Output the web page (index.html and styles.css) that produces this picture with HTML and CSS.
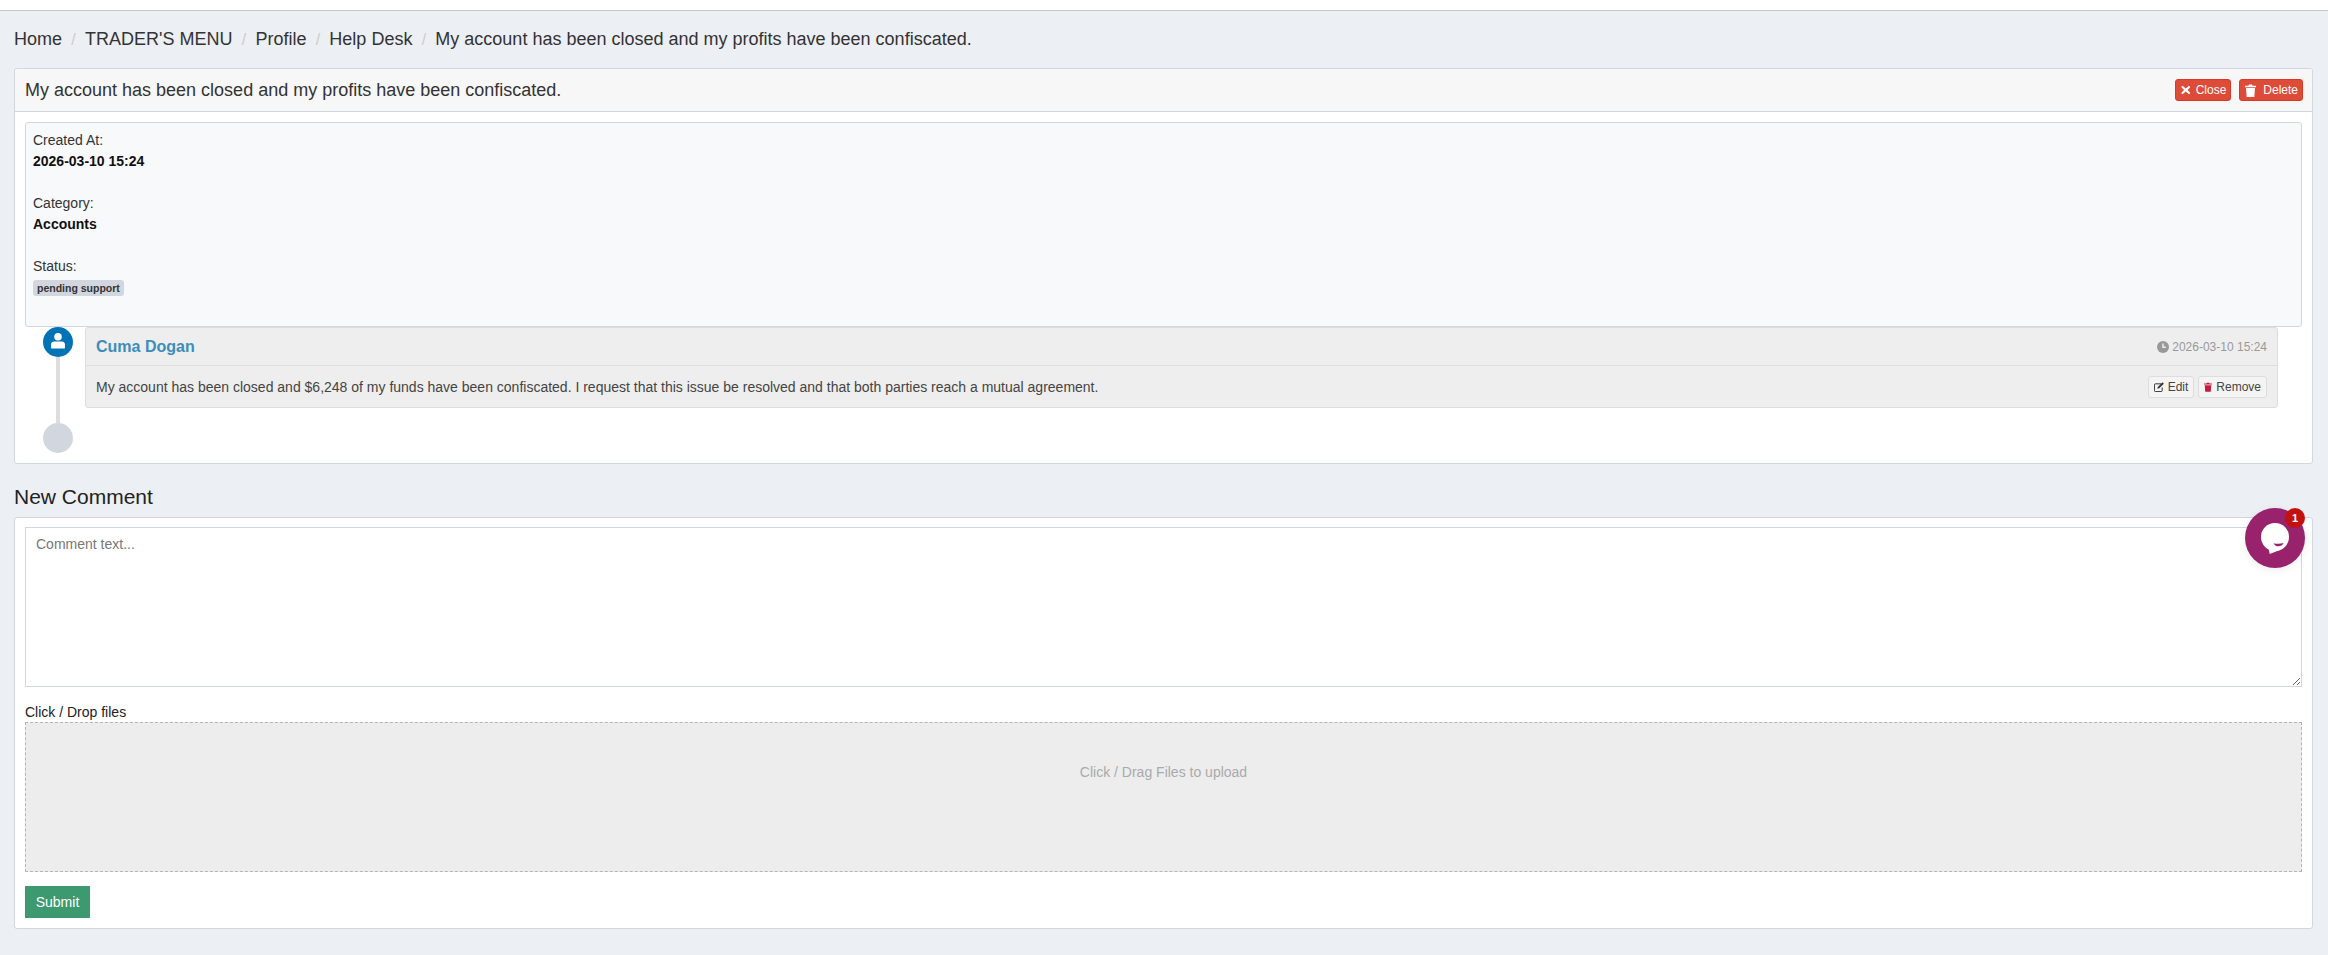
FILE: index.html
```html
<!DOCTYPE html>
<html lang="en">
<head>
<meta charset="utf-8">
<title>Help Desk</title>
<link rel="stylesheet" href="styles.css">
</head>
<body>
<div class="topbar"></div>
<main class="content">
  <nav class="crumbs">
    <a>Home</a><span class="sep">/</span><a>TRADER'S MENU</a><span class="sep">/</span><a>Profile</a><span class="sep">/</span><a>Help Desk</a><span class="sep">/</span><span>My account has been closed and my profits have been confiscated.</span>
  </nav>

  <section class="card">
    <header class="card-head">
      <h3>My account has been closed and my profits have been confiscated.</h3>
      <div class="head-actions">
        <button class="btn-red"><svg class="ico" viewBox="0 0 10 10"><path d="M1.6 0.4 5 3.4 8.4 0.4 9.8 1.9 6.8 5 9.8 8.1 8.4 9.6 5 6.6 1.6 9.6 0.2 8.1 3.2 5 0.2 1.9Z" fill="#fff"/></svg>Close</button>
        <button class="btn-red"><svg class="ico-trash" viewBox="0 0 11 13"><path d="M0 1.8H3.4L4 .6H7L7.6 1.8H11V3.2H0ZM1 4H10L9.3 13H1.7Z" fill="#fff"/></svg>Delete</button>
      </div>
    </header>
    <div class="card-body">
      <div class="info">
        <div class="info-label">Created At:</div>
        <div class="info-value">2026-03-10 15:24</div>
        <div class="info-label">Category:</div>
        <div class="info-value">Accounts</div>
        <div class="info-label">Status:</div>
        <span class="badge">pending support</span>
      </div>
      <div class="timeline">
        <div class="rail">
          <span class="dot dot-user"><svg viewBox="0 0 14 16" width="14" height="16"><circle cx="7" cy="3.800" r="3.800" fill="#fff"/><path d="M0 14.400V11.600C0 9.600 1.500 8.400 3.400 8.400H10.600C12.500 8.400 14 9.600 14 11.600V14.400A1.200 1.200 0 0 1 12.800 15.600H1.200A1.200 1.200 0 0 1 0 14.400Z" fill="#fff"/></svg></span>
          <span class="line"></span>
          <span class="dot dot-end"></span>
        </div>
        <article class="comment">
          <header class="comment-head">
            <a class="author">Cuma Dogan</a>
            <span class="time"><svg viewBox="0 0 12 12" width="12" height="12"><circle cx="6" cy="6" r="6" fill="#999"/><path d="M6 2.600V6.300H8.800" stroke="#eee" stroke-width="1.400" fill="none"/></svg>2026-03-10 15:24</span>
          </header>
          <div class="comment-body">
            <p>My account has been closed and $6,248 of my funds have been confiscated. I request that this issue be resolved and that both parties reach a mutual agreement.</p>
            <div class="comment-actions">
              <button class="btn-mini"><svg viewBox="0 0 12 12" width="10" height="10"><path d="M8.500 2.200H1.600A1.100 1.100 0 0 0 .5 3.300V10.400A1.100 1.100 0 0 0 1.600 11.500H8.700A1.100 1.100 0 0 0 9.800 10.400V6.600" stroke="#333" stroke-width="1.200" fill="none"/><path d="M10.200 .4 11.800 2 6.200 7.600 4 8.200 4.600 6Z" fill="#333"/></svg>Edit</button>
              <button class="btn-mini"><svg viewBox="0 0 11 13" width="8" height="10"><path d="M0 1.800H3.400L4 .6H7L7.600 1.800H11V3.200H0ZM1 4H10L9.300 13H1.700Z" fill="#c7193f"/></svg>Remove</button>
            </div>
          </div>
        </article>
      </div>
    </div>
  </section>

  <h2 class="section-title">New Comment</h2>

  <section class="card">
    <form class="card-body form">
      <textarea class="field" placeholder="Comment text..."></textarea>
      <label class="drop-label">Click / Drop files</label>
      <div class="dropzone">Click / Drag Files to upload</div>
      <button type="button" class="btn-submit">Submit</button>
    </form>
  </section>
</main>

<div class="chat">
  <svg viewBox="0 0 28 31" width="28" height="31"><circle cx="14" cy="14" r="14" fill="#fff"/><path d="M7.500 25 8.700 31 19 27Z" fill="#fff"/><path d="M12.500 20.200Q17.500 21.400 22.600 20Q21 23.300 17.200 23.300Q14 23.300 12.500 20.200Z" fill="#98226c"/></svg>
  <span class="chat-badge">1</span>
</div>
</body>
</html>
```
FILE: styles.css
```css
* { box-sizing: border-box; }
html, body { margin: 0; height: 100%; }
body {
  background: #eceff4;
  color: #333;
  font-family: "Liberation Sans", Arial, sans-serif;
  font-size: 14px;
  overflow: hidden;
}
.topbar { height: 11px; background: #fff; border-bottom: 1px solid #c3c6cc; }
.content { padding: 0 15px 0 14px; }
.crumbs {
  display: flex;
  align-items: center;
  height: 57px;
  font-size: 18px;
  color: #333;
}
.sep { color: #ccc; padding: 0 9.250px; font-size: 16px; }
.card {
  background: #fff;
  border: 1px solid #d2d6de;
  border-radius: 3px;
}
.card-head {
  display: flex;
  justify-content: space-between;
  align-items: center;
  height: 43px;
  padding: 0 9px 0 10px;
  background: #f7f7f7;
  border-bottom: 1px solid #d2d6de;
  border-radius: 3px 3px 0 0;
}
.card-head h3 { margin: 0; font-size: 18px; font-weight: 400; color: #333; }
.head-actions { display: flex; gap: 8px; }
.btn-red {
  display: inline-flex;
  align-items: center;
  gap: 5.500px;
  height: 22px;
  padding: 0 4px 0 5px;
  background: #dd4b39;
  border: 1px solid #d73925;
  border-radius: 3px;
  color: #fff;
  font: 12px "Liberation Sans", Arial, sans-serif;
}
.ico { width: 9.500px; height: 10px; }
.ico-trash { width: 11px; height: 13px; margin-right: 1.500px; }
.card-body { padding: 10px; }
.info {
  height: 205px;
  padding: 7px 7px;
  background: #f8f9fb;
  border: 1px solid #d2d6de;
  border-radius: 3px;
  font-size: 14px;
}
.info-label { line-height: 20px; color: #333; }
.info-value { line-height: 20px; margin: 1px 0 22px; font-weight: 700; color: #111; font-size: 14px; }
.badge {
  display: inline-block;
  height: 16px;
  margin-top: 4px;
  padding: 0 4px;
  background: #d2d6de;
  border-radius: 3px;
  color: #333;
  font-size: 10.500px;
  font-weight: 700;
  line-height: 16px;
  vertical-align: top;
}
.timeline { display: flex; padding-left: 18px; height: 126px; gap: 12px; }
.rail { display: flex; flex-direction: column; align-items: center; width: 30px; }
.dot { display: flex; align-items: center; justify-content: center; width: 30px; height: 30px; border-radius: 50%; flex: none; }
.dot-user { background: #0073b7; padding-bottom: 2px; }
.dot-end { background: #d2d6de; }
.line { width: 4px; flex: 1; background: #ddd; }
.comment {
  flex: 1;
  align-self: flex-start;
  margin-right: 24px;
  height: 81px;
  background: #eee;
  border: 1px solid #ddd;
  border-radius: 3px;
}
.comment-head {
  display: flex;
  justify-content: space-between;
  align-items: center;
  height: 38px;
  padding: 0 10px;
  border-bottom: 1px solid #ddd;
}
.author { color: #3c8dbc; font-size: 16px; font-weight: 700; }
.time { display: inline-flex; align-items: center; gap: 3px; color: #999; font-size: 12px; }
.comment-body {
  display: flex;
  justify-content: space-between;
  align-items: center;
  height: 41px;
  padding: 0 10px;
}
.comment-body p { margin: 0; font-size: 14px; color: #444; }
.comment-actions { display: flex; gap: 4px; }
.btn-mini {
  display: inline-flex;
  align-items: center;
  gap: 4px;
  height: 22px;
  padding: 0 5px;
  background: #f4f4f4;
  border: 1px solid #ddd;
  border-radius: 3px;
  color: #444;
  font: 12px "Liberation Sans", Arial, sans-serif;
}
.section-title { margin: 0; height: 53px; line-height: 66px; font-size: 21px; font-weight: 400; color: #222; }
.form { display: flex; flex-direction: column; align-items: flex-start; padding-top: 9px; }
.field {
  display: block;
  width: 100%;
  height: 160px;
  padding: 8px 10px;
  border: 1px solid #d2d6de;
  border-radius: 0;
  font: 14px "Liberation Sans", Arial, sans-serif;
  color: #555;
  outline: none;
}
.field::placeholder { color: #777; opacity: 1; }
.drop-label { margin-top: 16px; height: 19px; line-height: 19px; color: #222; font-size: 14px; }
.dropzone {
  width: 100%;
  height: 150px;
  padding-top: 39px;
  background: #ededed;
  border: 1px dashed #b5b5b5;
  color: #aaa;
  font-size: 14px;
  line-height: 20px;
  text-align: center;
}
.btn-submit {
  margin-top: 14px;
  width: 65px;
  height: 32px;
  background: #3d9970;
  border: 0;
  color: #fff;
  font: 14px "Liberation Sans", Arial, sans-serif;
}
.chat {
  position: fixed;
  left: 2245px;
  top: 508px;
  width: 60px;
  height: 60px;
  display: flex;
  align-items: center;
  justify-content: center;
  border-radius: 50%;
  background: #98226c;
  box-shadow: 0 2px 8px rgba(0, 0, 0, .08);
}
.chat-badge {
  position: absolute;
  right: 0;
  top: 0;
  width: 20px;
  height: 20px;
  border-radius: 50%;
  background: #c3120e;
  color: #fff;
  font-size: 11px;
  font-weight: 700;
  line-height: 20px;
  text-align: center;
}
```
